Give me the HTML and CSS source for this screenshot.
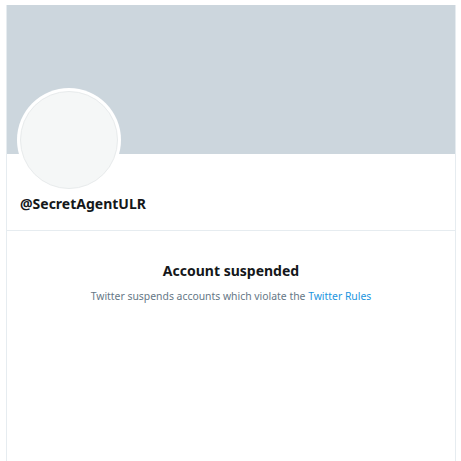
FILE: index.html
```html
<!DOCTYPE html>
<html>
<head>
<meta charset="utf-8">
<link rel="stylesheet" href="styles.css">
</head>
<body>
<div class="page">
  <div class="profile">
    <div class="banner"></div>
    <div class="header">
      <div class="avatar"><div class="avatar-inner"></div></div>
      <div class="handle">@SecretAgentULR</div>
    </div>
    <div class="suspended">
      <h1 class="title">Account suspended</h1>
      <p class="desc">Twitter suspends accounts which violate the <a class="link" href="#">Twitter Rules</a></p>
    </div>
  </div>
</div>
</body>
</html>
```
FILE: styles.css
```css
html, body {
  margin: 0;
  padding: 0;
  background: #ffffff;
  font-family: "Noto Sans", "Open Sans", sans-serif;
}
.page {
  padding: 5px 5px 0 6px;
  height: 461px;
  box-sizing: border-box;
}
.profile {
  height: 100%;
  border-left: 1px solid #e6ecf0;
  border-right: 1px solid #e6ecf0;
  box-sizing: border-box;
}
.banner {
  height: 149px;
  background: #ccd6dd;
}
.header {
  position: relative;
  padding: 40px 0 0 13px;
  height: 36px;
  border-bottom: 1px solid #e6ecf0;
}
.avatar {
  position: absolute;
  left: 10px;
  top: -66px;
  width: 104px;
  height: 104px;
  border-radius: 50%;
  background: #ffffff;
  box-sizing: border-box;
  padding: 3px;
}
.avatar-inner {
  width: 100%;
  height: 100%;
  border-radius: 50%;
  background: #f5f7f7;
  border: 1px solid #e8ebec;
  box-sizing: border-box;
}
.handle {
  font-size: 14px;
  font-weight: 700;
  color: #14171a;
  line-height: 20px;
}
.suspended {
  text-align: center;
  padding-top: 30px;
}
.title {
  margin: 0;
  font-size: 14px;
  font-weight: 700;
  color: #14171a;
  line-height: 20px;
}
.desc {
  margin: 8px 0 0;
  font-size: 10.4px;
  color: #657786;
  line-height: 14px;
}
.link {
  color: #1b95e0;
  text-decoration: none;
}
```
